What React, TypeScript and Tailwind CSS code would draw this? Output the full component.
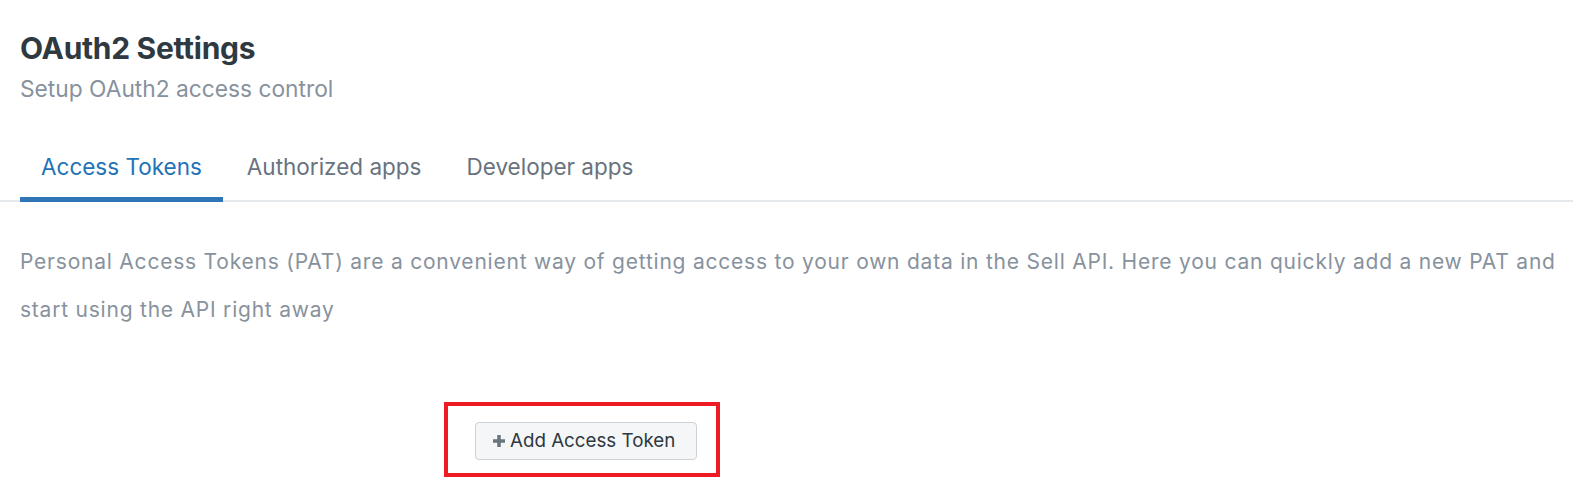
import React, { useState } from 'react';

const tabs = ['Access Tokens', 'Authorized apps', 'Developer apps'];

export const App: React.FC = () => {
  const [activeTab, setActiveTab] = useState<string>('Access Tokens');

  return (
    <div className="min-h-screen w-full bg-white font-['Inter',sans-serif] overflow-hidden">
      <header className="pl-5 pt-[30px]">
        <h1 className="text-[30px] leading-[36px] font-bold text-[#2f3941] tracking-[-0.3px]">OAuth2 Settings</h1>
        <p className="mt-[9px] text-[22.75px] leading-[28px] text-[#87929d]">Setup OAuth2 access control</p>
      </header>

      <nav className="mt-[50px] mr-[17px] border-b-2 border-[#e4e8eb]">
        <div className="flex gap-[3px] pl-5 -mb-[2px]">
          {tabs.map((tab) => (
            <button
              key={tab}
              onClick={() => setActiveTab(tab)}
              className={`px-[21px] pb-4 text-[22.5px] leading-[28px] border-b-[5px] ${
                activeTab === tab
                  ? 'text-[#1f73b7] border-[#2f76b6]'
                  : 'text-[#68737d] border-transparent'
              }`}
            >
              {tab}
            </button>
          ))}
        </div>
      </nav>

      <p className="mt-[36px] pl-5 mr-[17px] text-[21px] leading-[48px] tracking-[0.78px] text-[#87929d]">
        Personal Access Tokens (PAT) are a convenient way of getting access to your own data in the Sell API. Here you can quickly add a new PAT and start using the API right away
      </p>

      <div className="mt-[88px] ml-[475px]">
        <div className="relative inline-block">
          <button className="flex items-center gap-[5px] h-[38px] pl-[17px] pr-[21px] rounded-[4px] border border-[#cdd2d6] bg-[#f5f6f7] text-[18.75px] text-[#2f3941]">
            <svg width="12" height="12" viewBox="0 0 12 12" className="shrink-0">
              <path d="M6 0v12M0 6h12" stroke="#6b757e" strokeWidth="3.5" />
            </svg>
            <span>Add Access Token</span>
          </button>
          <div className="absolute -left-[31px] -top-[20px] -right-[23px] -bottom-[17px] border-4 border-[#ee1b24] pointer-events-none" />
        </div>
      </div>
    </div>
  );
};

export default App;
